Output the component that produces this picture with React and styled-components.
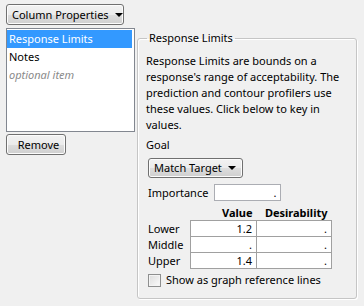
import React from 'react';
import styled, { createGlobalStyle } from 'styled-components';

const Global = createGlobalStyle`
  html, body { margin: 0; padding: 0; background: #f0f0f0; }
  body {
    font-family: "Noto Sans", "Open Sans", sans-serif;
    font-size: 11px;
    color: #000;
  }
  #root { width: 364px; height: 306px; }
`;

const Page = styled.div`
  display: flex;
  align-items: flex-start;
  gap: 2px;
  padding: 4px 0 0 6px;
  width: 364px;
  height: 306px;
  box-sizing: border-box;
`;

const LeftCol = styled.div`
  width: 129px;
  display: flex;
  flex-direction: column;
  align-items: flex-start;
`;

const WinButton = styled.button`
  display: inline-flex;
  align-items: center;
  gap: 6px;
  height: ${p => p.$h || 21}px;
  width: ${p => p.$w}px;
  padding: 0 0 1px 5px;
  box-sizing: border-box;
  border: 1px solid #707070;
  border-radius: 3px;
  background: linear-gradient(#f2f2f2 0%, #ebebeb 50%, #dddddd 51%, #cfcfcf 100%);
  box-shadow: inset 0 0 0 1px #fcfcfc;
  font: inherit;
  font-size: 11px;
  color: #000;
  line-height: 1;
  white-space: nowrap;
  justify-content: ${p => (p.$center ? 'center' : 'flex-start')};
`;

const Arrow = styled.span`
  width: 0;
  height: 0;
  border-left: 4px solid transparent;
  border-right: 4px solid transparent;
  border-top: 4px solid #000;
  margin-top: 1px;
`;

const List = styled.div`
  margin-top: 3px;
  width: 129px;
  height: 104px;
  box-sizing: border-box;
  border: 1px solid #828790;
  background: #fff;
  padding: 1px 2px 0 0;
`;

const ListItem = styled.div`
  height: 18px;
  line-height: 18px;
  padding-left: 2px;
  background: ${p => (p.$selected ? '#3399ff' : 'transparent')};
  color: ${p => (p.$selected ? '#fff' : p.$muted ? '#8a8a8a' : '#000')};
  font-style: ${p => (p.$muted ? 'italic' : 'normal')};
`;

const RemoveWrap = styled.div`
  margin-top: 2px;
`;

const Group = styled.fieldset`
  margin: 26px 0 0 0;
  width: 220px;
  height: 269px;
  box-sizing: border-box;
  border: 1px solid #c5c5c5;
  border-radius: 3px;
  box-shadow: inset 1px 1px 0 #fff, 1px 1px 0 #fff;
  padding: 3px 6px 0 8px;
`;

const Legend = styled.legend`
  padding: 0 2px;
  margin-left: 1px;
  line-height: 16px;
  font-size: 11px;
`;

const Desc = styled.p`
  margin: 4px 0 0 0;
  line-height: 16px;
`;

const Label = styled.div`
  margin-top: 4px;
  line-height: 16px;
`;

const Indent = styled.div`
  margin-left: 2px;
  margin-top: ${p => p.$mt || 0}px;
  display: flex;
  align-items: center;
  gap: ${p => p.$gap || 0}px;
`;

const Field = styled.div`
  width: ${p => p.$w}px;
  height: 17px;
  box-sizing: border-box;
  border: 1px solid #abadb3;
  background: #fff;
  text-align: right;
  padding-right: 4px;
  line-height: 15px;
`;

const Table = styled.table`
  border-collapse: collapse;
  margin-left: 2px;
  margin-top: 3px;
  td, th { padding: 0; height: 16px; line-height: 15px; }
`;

const Head = styled.th`
  font-weight: bold;
  text-align: right;
  padding-right: 4px !important;
`;

const RowLabel = styled.td`
  width: 42px;
  text-align: left;
`;

const Cell = styled.td`
  width: ${p => p.$w}px;
  box-sizing: border-box;
  border: 1px solid #a0a0a0;
  background: #fff;
  text-align: right;
  padding-right: 4px !important;
`;

const CheckRow = styled.label`
  margin: 3px 0 0 2px;
  display: flex;
  align-items: center;
  gap: 5px;
  line-height: 16px;
`;

const Box = styled.span`
  width: 13px;
  height: 13px;
  box-sizing: border-box;
  border: 1px solid #8e8f8f;
  background: linear-gradient(135deg, #dcdcdc, #fbfbfb);
  box-shadow: inset 0 0 0 1px #f4f4f4;
`;

const rows = [
  ['Lower', '1.2', '.'],
  ['Middle', '.', '.'],
  ['Upper', '1.4', '.'],
];

export default function App() {
  return (
    <>
      <Global />
      <Page>
        <LeftCol>
          <WinButton $w={118}>
            Column Properties <Arrow />
          </WinButton>
          <List>
            <ListItem $selected>Response Limits</ListItem>
            <ListItem>Notes</ListItem>
            <ListItem $muted>optional item</ListItem>
          </List>
          <RemoveWrap>
            <WinButton $w={60} $center>Remove</WinButton>
          </RemoveWrap>
        </LeftCol>
        <Group>
          <Legend>Response Limits</Legend>
          <Desc>
            Response Limits are bounds on a response's range of acceptability. The
            prediction and contour profilers use these values. Click below to key in
            values.
          </Desc>
          <Label>Goal</Label>
          <Indent $mt={5}>
            <WinButton $w={95} $h={20}>
              Match Target <Arrow />
            </WinButton>
          </Indent>
          <Indent $mt={6} $gap={6}>
            <span>Importance</span>
            <Field $w={67}>.</Field>
          </Indent>
          <Table>
            <thead>
              <tr>
                <th />
                <Head>Value</Head>
                <Head>Desirability</Head>
              </tr>
            </thead>
            <tbody>
              {rows.map(([l, v, d]) => (
                <tr key={l}>
                  <RowLabel>{l}</RowLabel>
                  <Cell $w={66}>{v}</Cell>
                  <Cell $w={75}>{d}</Cell>
                </tr>
              ))}
            </tbody>
          </Table>
          <CheckRow>
            <Box />
            Show as graph reference lines
          </CheckRow>
        </Group>
      </Page>
    </>
  );
}
